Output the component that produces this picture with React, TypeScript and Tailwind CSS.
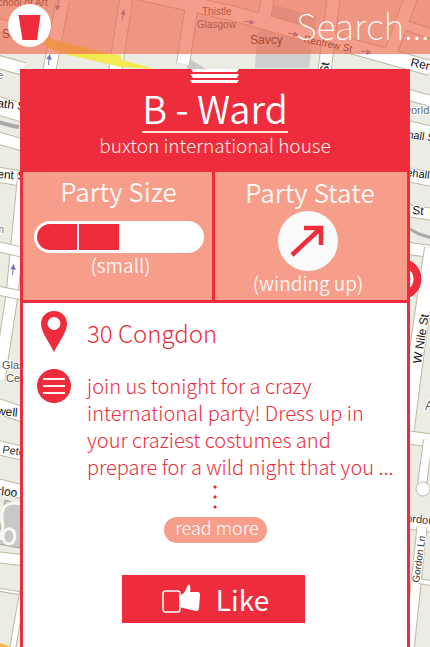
import React from "react";

function Road({ d, w }: { d: string; w: number }) {
  return (
    <g fill="none" strokeLinejoin="round">
      <path d={d} stroke="#bdb8a2" strokeWidth={w + 2} />
      <path d={d} stroke="#ffffff" strokeWidth={w} />
    </g>
  );
}

function Arrow({ x, y, r }: { x: number; y: number; r: number }) {
  return (
    <path
      d="M-5 0H4M1 -2L5 0L1 2Z"
      transform={`translate(${x} ${y}) rotate(${r})`}
      stroke="#7a75bd"
      fill="#7a75bd"
      strokeWidth="1"
    />
  );
}

function Label({ x, y, r = 0, size = 12, color = "#111111", children }: {
  x: number; y: number; r?: number; size?: number; color?: string; children: string;
}) {
  return (
    <text
      transform={`translate(${x} ${y}) rotate(${r})`}
      fontSize={size}
      fill={color}
      stroke="#ffffff"
      strokeWidth="2"
      paintOrder="stroke"
    >
      {children}
    </text>
  );
}

function StreetMap() {
  return (
    <svg
      className="absolute inset-0 h-full w-full font-['Liberation_Sans',sans-serif] font-normal"
      viewBox="0 0 430 647"
      preserveAspectRatio="xMidYMin slice"
      aria-hidden="true"
    >
      <rect width="430" height="647" fill="#ecebe4" />
      <path d="M274 5L316 16L309 68H255L257 36Z" fill="#cfcfcd" />
      <path d="M188 58L206 69H187Z" fill="#c9c9c9" />
      <g fill="none" stroke="#bdb8a2" strokeLinejoin="round">
        <path d="M-5 24L45 38M-5 61L24 69M63 0L49 72M126 0L115 72M192 5L183 64M268 -4L264 20M334 -5L324 75M412 -5L391 52" strokeWidth="14" />
        <path d="M115 -13L235 14L430 68" strokeWidth="16" />
        <path d="M395 22L435 35" strokeWidth="11" />
      </g>
      <g fill="none" stroke="#ffffff" strokeLinejoin="round">
        <path d="M-5 24L45 38M-5 61L24 69M63 0L49 72M126 0L115 72M192 5L183 64M268 -4L264 20M334 -5L324 75M412 -5L391 52" strokeWidth="12" />
        <path d="M115 -13L235 14L430 68" strokeWidth="14" />
        <path d="M395 22L435 35" strokeWidth="9" />
      </g>
      <path d="M40 36L112 54L121 55L122 60L155 69L121 67L60 53L45 46Z" fill="#f3e950" />
      <Arrow x={58} y={5} r={100} />
      <Arrow x={49} y={60} r={-83} />
      <Arrow x={123} y={15} r={-80} />
      <Arrow x={249} y={22} r={8} />
      <Arrow x={293} y={34} r={12} />
      <Arrow x={366} y={52} r={12} />
      <g>
        <text x="-9" y="6" fontSize="10" fill="#333333">School of Art</text>
        <text x="2" y="38" fontSize="12" fill="#111111">Sau</text>
        <text x="202" y="15" fontSize="10" fill="#444444">Thistle</text>
        <text x="197" y="28" fontSize="10" fill="#444444">Glasgow</text>
        <text x="250" y="44" fontSize="12" fill="#111111">Savcy</text>
        <text transform="translate(303 42) rotate(12)" fontSize="10" fill="#111111">Renfrew St</text>
      </g>
      <Label x={328} y={74} r={-83}>St</Label>
      <Label x={410} y={66} r={12}>Renfrew</Label>

      <Road d="M-5 105L30 115" w={17} />
      <Road d="M-5 137L30 147" w={11} />
      <path d="M-2 122L13 126L19 127" stroke="#aaa9a7" strokeWidth="4" fill="none" />
      <Road d="M-5 174L30 180" w={14} />
      <Road d="M24 172L12 295L-1 380" w={11} />
      <Road d="M-5 246L30 254" w={9} />
      <Road d="M-5 290L30 297" w={8} />
      <Road d="M-5 405L30 417" w={14} />
      <Road d="M-5 447L30 455" w={13} />
      <Road d="M-5 485L30 494" w={13} />
      <Road d="M-5 557L30 561" w={10} />
      <Road d="M-5 589L30 595" w={2} />
      <Road d="M23 590L12 652" w={5} />
      <path d="M5 500L24 506L20 548L-2 544Z" fill="#c8c8c8" stroke="#a9a595" />
      <path d="M23 504C2 500 0 510 3 526L0 540M3 538C2 526 15 526 15 536C14 546 5 546 3 538Z" fill="none" stroke="#f8f7f1" strokeWidth="3" />
      <path d="M-2 645L16 651" stroke="#f5b74e" strokeWidth="5" />
      <Arrow x={13} y={270} r={-84} />
      <Label x={-8} y={79} size={11} color="#777777">se</Label>
      <Label x={-3} y={107} r={7}>ath St</Label>
      <Label x={-3} y={178} r={4}>ent St</Label>
      <Label x={-5} y={233} size={11} color="#777777">m</Label>
      <Label x={2} y={369} size={11} color="#555555">Glasgow</Label>
      <Label x={6} y={382} size={11} color="#555555">Central</Label>
      <Label x={-10} y={414} r={6}>nwell</Label>
      <Label x={2} y={453} r={8} size={11} color="#333333">Peter</Label>
      <Label x={-3} y={495} r={5}>rloo St</Label>

      <Road d="M405 94L435 102" w={10} />
      <Road d="M405 127L435 134" w={13} />
      <Road d="M405 174L435 180" w={13} />
      <Road d="M405 210L435 215" w={11} />
      <Road d="M405 248L435 252" w={11} />
      <path d="M408 228L419 234L432 238" stroke="#aaa9a7" strokeWidth="3" fill="none" />
      <Road d="M432 248L417 350L406 435" w={14} />
      <Road d="M405 437L435 441" w={12} />
      <Road d="M428 440L422 485" w={8} />
      <circle cx="423" cy="489" r="7" fill="#ffffff" stroke="#bdb8a2" />
      <Road d="M405 522L435 526" w={12} />
      <Road d="M422 527L409 650" w={9} />
      <Road d="M419 581L435 584" w={4} />
      <Label x={403} y={114} size={11} color="#666666">world</Label>
      <Label x={407} y={138} r={8} size={11}>hall St</Label>
      <Label x={406} y={176} r={7} size={11}>ehall Ln</Label>
      <Label x={412} y={214} r={5}>St</Label>
      <Label x={421} y={364} r={-81}>W Nile St</Label>
      <Label x={425} y={410} size={12} color="#555555">Ar</Label>
      <Label x={406} y={522} r={5} size={11} color="#333333">ordon</Label>
      <Label x={419} y={583} r={-82} size={10} color="#333333">Gordon Ln</Label>
      <circle cx="401" cy="279" r="21" fill="#ee2c3b" stroke="#ffffff" />
      <circle cx="401" cy="279" r="11" fill="none" stroke="#ffffff" strokeWidth="3" />
    </svg>
  );
}

function GripLines() {
  return (
    <svg className="mx-auto block" width="50" height="16" viewBox="0 0 50 16" aria-hidden="true">
      <path d="M1 0H49L47 3H3ZM0 5H49L47 9H3ZM0 11H49L47 14H2Z" fill="#ffffff" />
    </svg>
  );
}

export default function App() {
  return (
    <div className="relative flex min-h-screen flex-col overflow-hidden font-['Noto_Sans_CJK_SC','Noto_Sans_CJK_JP',sans-serif] font-light">
      <StreetMap />
      <header className="relative flex h-[54px] items-start justify-between bg-[#f0684d]/65 pl-2">
        <button aria-label="Home" className="mt-1 shrink-0">
          <svg className="block" width="43" height="43" viewBox="0 0 43 43" aria-hidden="true">
            <circle cx="21.5" cy="21.5" r="21.5" fill="#ffffff" />
            <path d="M10.500 11H32.500L29 36H14.500Z" fill="#ee2c3b" />
          </svg>
        </button>
        <input
          type="text"
          aria-label="Search"
          placeholder="Search..."
          className="h-12 w-[134px] bg-transparent text-4xl leading-[48px] font-thin text-white outline-none placeholder:text-white"
        />
      </header>

      <main className="relative mx-5 mt-[15px] flex flex-1 flex-col border-x-[3px] border-[#ee2c3b] bg-white">
        <section className="h-[103px] bg-[#ee2c3b] text-center text-white">
          <GripLines />
          <h1 className="mx-auto w-fit border-b-2 border-[#fde3dc] text-[38px] leading-[46px] font-[350]">B - Ward</h1>
          <p className="text-[19px] leading-6 text-[#fff0ea]">buxton international house</p>
        </section>

        <section className="grid h-[131px] grid-cols-2 divide-x-[3px] divide-[#ee2c3b] border-b-[3px] border-[#ee2c3b] bg-[#f79e8b] text-center text-[#fff7f4]">
          <div className="flex flex-col items-center pt-px pl-0.5">
            <h2 className="text-[26px] leading-9 font-[350]">Party Size</h2>
            <div role="img" aria-label="Party size: small" className="mt-3 flex h-8 w-[170px] gap-0.5 rounded-full bg-white p-[3px]">
              <span className="w-10 rounded-l-full bg-[#ee2c3b]" />
              <span className="w-10 bg-[#ee2c3b]" />
            </div>
            <p className="pl-1 text-[19px] leading-6 font-[350]">(small)</p>
          </div>
          <div className="flex flex-col items-center pt-0.5 pr-1.5">
            <h2 className="pl-1 text-[26px] leading-9 font-[350]">Party State</h2>
            <svg className="mt-px block" width="60" height="60" viewBox="0 0 60 60" aria-hidden="true">
              <circle cx="30" cy="30" r="30" fill="#fafafa" />
              <path d="M14 44L43 17M26 17H43V34" fill="none" stroke="#ee2c3b" strokeWidth="4.500" />
            </svg>
            <p className="text-[19px] leading-6 font-[350]">(winding up)</p>
          </div>
        </section>

        <section className="flex flex-col text-[#ee2c3b]">
          <div className="flex pt-2 pl-[18px]">
            <svg className="shrink-0" width="26" height="42" viewBox="0 0 26 42" aria-hidden="true">
              <path fillRule="evenodd" d="M13 0C5 0 0 6 0 13C0 21 8 31 13 41C18 31 26 21 26 13C26 6 21 0 13 0ZM13 6A6.500 6.500 0 1 1 13 19A6.500 6.500 0 0 1 13 6Z" fill="#ee2c3b" />
            </svg>
            <p className="ml-5 pt-1 text-2xl leading-9">30 Congdon</p>
          </div>
          <div className="flex pt-4 pl-[14px]">
            <svg className="shrink-0" width="34" height="34" viewBox="0 0 34 34" aria-hidden="true">
              <circle cx="17" cy="17" r="17" fill="#ee2c3b" />
              <path d="M6 10H28M6 17H28M6 24H28" stroke="#fff5ee" strokeWidth="2" />
            </svg>
            <p className="ml-4 pt-[3px] text-xl leading-[27px]">
              join us tonight for a crazy<br />
              international party! Dress up in<br />
              your craziest costumes and<br />
              prepare for a wild night that you ...
            </p>
          </div>
          <svg className="mx-auto mt-[5px] block" width="4" height="24" viewBox="0 0 4 24" aria-hidden="true">
            <path d="M2 0L4 2L2 4L0 2ZM2 10L4 12L2 14L0 12ZM2 20L4 22L2 24L0 22Z" fill="#ee2c3b" />
          </svg>
          <button className="mx-auto mt-2 h-[26px] w-[103px] rounded-full bg-[#f79e8b] pb-1.5 pl-1 text-lg leading-5 text-white">read more</button>
          <div className="mt-8 flex justify-center pr-[3px]">
            <button className="flex h-12 w-[183px] items-center justify-center gap-4 bg-[#ee2c3b] pl-1 text-[28px] leading-[48px] font-normal text-white">
              <svg width="38" height="30" viewBox="0 0 38 30" aria-hidden="true">
                <rect x="1" y="7" width="17" height="21" rx="2.500" fill="none" stroke="#ffffff" strokeWidth="1.500" />
                <path d="M17 12L22 9L26 1C28 0 29 2 28 8H36Q38 8 38 11L37 24Q37 27 34 27L17 23Z" fill="#ffffff" />
              </svg>
              Like
            </button>
          </div>
        </section>
      </main>
    </div>
  );
}
